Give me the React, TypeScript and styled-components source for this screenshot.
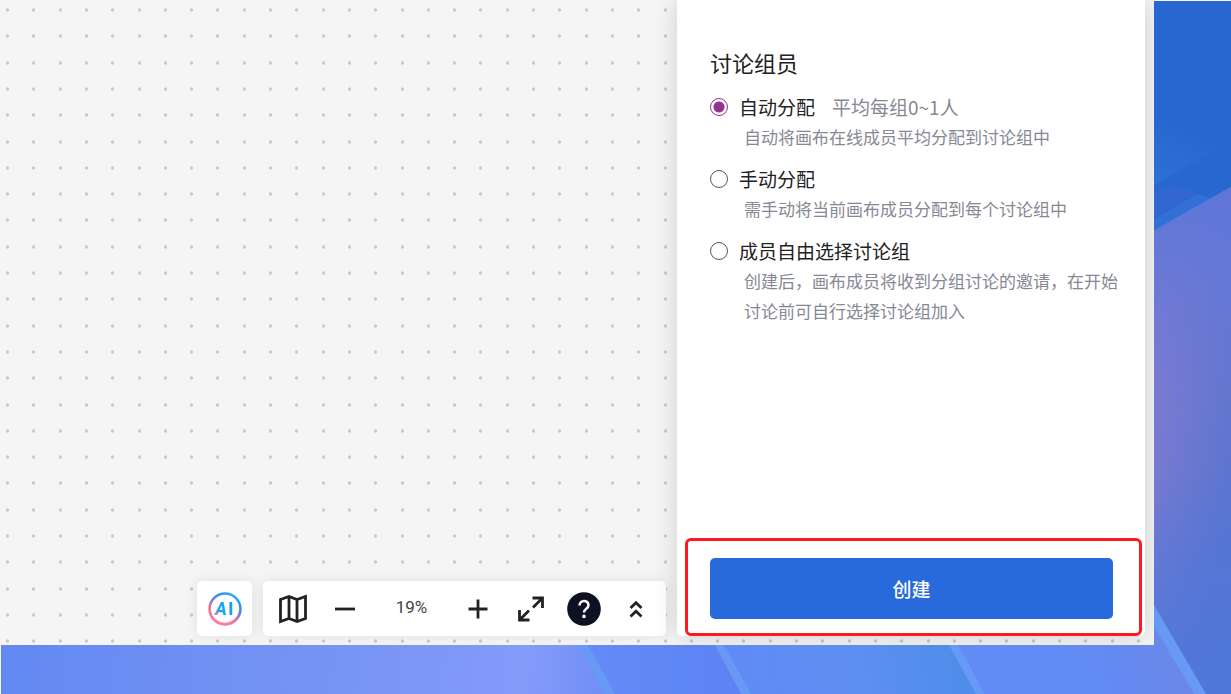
import React from 'react';
import styled, { createGlobalStyle } from 'styled-components';

const GlobalStyle = createGlobalStyle`
  * { box-sizing: border-box; }
  body {
    margin: 0;
    background: #f5f5f5;
    color: #222;
    font-family: "Noto Sans CJK SC", "Noto Sans", sans-serif;
  }
  button, input { font: inherit; }
`;

const Page = styled.div`
  display: grid;
  grid-template: minmax(0, 1fr) / minmax(0, 1fr);
  min-height: 100vh;
`;

const Backdrop = styled.svg`
  grid-area: 1 / 1;
  width: calc(100% - 1px);
  height: calc(100% - 1px);
  margin: 1px 0 0 1px;
`;

const Workspace = styled.main`
  grid-area: 1 / 1;
  z-index: 1;
  display: grid;
  grid-template: minmax(0, 1fr) / minmax(0, 1fr);
  margin: 0 77px 49px 0;
  background: #f5f5f5;
  overflow: hidden;
`;

const Dots = styled.svg`
  grid-area: 1 / 1;
  width: 100%;
  height: 100%;
`;

const Layers = styled.div`
  grid-area: 1 / 1;
  z-index: 1;
  display: flex;
  justify-content: flex-end;
  align-items: flex-end;
  gap: 11px;
  padding: 0 9px 9px 0;
`;

const Toolbar = styled.div<{ $width: number }>`
  display: flex;
  align-items: center;
  justify-content: center;
  flex: none;
  height: 55px;
  width: ${(p) => p.$width}px;
  background: #fff;
  border-radius: 5px;
  box-shadow: 0 0 14px rgba(0, 0, 0, 0.09);
`;

const ToolButton = styled.button<{ $width: number }>`
  display: flex;
  align-items: center;
  justify-content: center;
  width: ${(p) => p.$width}px;
  height: 54px;
  padding: 0;
  border: 0;
  background: none;
  color: #222;
`;

const ZoomLevel = styled.output`
  width: 80px;
  text-align: center;
  font: 17px/24px Roboto, sans-serif;
  padding-bottom: 3px;
  color: #444;
`;

const Panel = styled.form`
  display: flex;
  flex-direction: column;
  align-self: stretch;
  flex: none;
  width: 468px;
  background: #fff;
  border-radius: 0 0 5px 5px;
  box-shadow: 0 0 24px rgba(0, 0, 0, 0.16);
`;

const Members = styled.fieldset`
  display: flex;
  flex-direction: column;
  gap: 11px;
  flex: 1;
  margin: 0;
  padding: 45px 24px 16px 33px;
  border: 0;
`;

const Legend = styled.legend`
  float: left;
  padding: 0;
  font-size: 22px;
  line-height: 35px;
`;

const Option = styled.div`
  display: grid;
  grid-template-columns: 18px minmax(0, 1fr);
  column-gap: 11px;
  align-items: center;
`;

const Radio = styled.input`
  appearance: none;
  width: 18px;
  height: 18px;
  margin: 0;
  border: 1px solid #555;
  border-radius: 50%;
  background: #fff;

  &:checked {
    border-color: #94328f;
    background: radial-gradient(circle, #94328f 5px, #fff 6px);
  }
`;

const OptionLabel = styled.label`
  font-size: 19px;
  line-height: 31px;
`;

const Hint = styled.span`
  margin-left: 17px;
  color: #868993;
`;

const Description = styled.p`
  grid-column: 2;
  margin: 0 0 0 5px;
  font-size: 17px;
  line-height: 30px;
  color: #868993;
`;

const Highlight = styled.div`
  margin: 0 3px 0 8px;
  padding: 17px 26px 14px 22px;
  border: 3px solid #ff1721;
  border-radius: 6px;
`;

const CreateButton = styled.button`
  display: block;
  width: 100%;
  height: 61px;
  padding: 0;
  border: 0;
  border-radius: 5px;
  background: #286adb;
  color: #fff;
  font-size: 19px;
  font-weight: 500;
  line-height: 30px;
`;

const options = [
  { id: 'auto', label: '自动分配', hint: '平均每组0~1人', text: '自动将画布在线成员平均分配到讨论组中' },
  { id: 'manual', label: '手动分配', text: '需手动将当前画布成员分配到每个讨论组中' },
  { id: 'free', label: '成员自由选择讨论组', text: '创建后，画布成员将收到分组讨论的邀请，在开始讨论前可自行选择讨论组加入' },
];

const steps = [0, 26, 53, 79, 105, 132, 158, 184, 210, 237];

function DotGrid() {
  return (
    <Dots aria-hidden="true">
      <defs>
        <pattern id="dots" width="263" height="263" patternUnits="userSpaceOnUse">
          {steps.map((y) => steps.map((x) => <circle key={`${x}-${y}`} cx={x + 7.5} cy={y + 10} r="1.7" fill="#c9c9c9" />))}
        </pattern>
      </defs>
      <rect width="100%" height="100%" fill="url(#dots)" />
    </Dots>
  );
}

function BackdropArt() {
  return (
    <Backdrop viewBox="1 1 1230 693" preserveAspectRatio="none" aria-hidden="true">
      <defs>
        <linearGradient id="left" gradientUnits="userSpaceOnUse" x1="0" y1="640" x2="610" y2="700">
          <stop offset="0" stopColor="#6289f2" />
          <stop offset="0.65" stopColor="#7b96f5" />
          <stop offset="0.86" stopColor="#849bfa" />
          <stop offset="1" stopColor="#6f8df6" />
        </linearGradient>
        <linearGradient id="mid1" gradientUnits="userSpaceOnUse" x1="580" y1="0" x2="740" y2="0">
          <stop offset="0" stopColor="#648cf7" />
          <stop offset="1" stopColor="#5c82f4" />
        </linearGradient>
        <linearGradient id="mid2" gradientUnits="userSpaceOnUse" x1="720" y1="690" x2="960" y2="645">
          <stop offset="0" stopColor="#608af6" />
          <stop offset="0.5" stopColor="#5f8ff2" />
          <stop offset="1" stopColor="#4f8dea" />
        </linearGradient>
        <linearGradient id="mid3" gradientUnits="userSpaceOnUse" x1="950" y1="694" x2="1190" y2="640">
          <stop offset="0" stopColor="#618cf6" />
          <stop offset="0.6" stopColor="#628bf4" />
          <stop offset="1" stopColor="#6c86e6" />
        </linearGradient>
        <linearGradient id="side" gradientUnits="userSpaceOnUse" x1="1145" y1="400" x2="1245" y2="420">
          <stop offset="0" stopColor="#7f7bd0" />
          <stop offset="1" stopColor="#5b75cf" />
        </linearGradient>
        <linearGradient id="sideTop" gradientUnits="userSpaceOnUse" x1="0" y1="210" x2="0" y2="410">
          <stop offset="0" stopColor="#6077d8" />
          <stop offset="1" stopColor="#6077d8" stopOpacity="0" />
        </linearGradient>
        <linearGradient id="sideEnd" gradientUnits="userSpaceOnUse" x1="1154" y1="480" x2="1215" y2="660">
          <stop offset="0" stopColor="#5077da" stopOpacity="0" />
          <stop offset="1" stopColor="#5077da" />
        </linearGradient>
        <linearGradient id="wedge" gradientUnits="userSpaceOnUse" x1="1154" y1="185" x2="1185" y2="120">
          <stop offset="0" stopColor="#2e70d4" />
          <stop offset="1" stopColor="#2866d0" />
        </linearGradient>
      </defs>
      <rect x="0" y="0" width="1231" height="694" fill="url(#left)" />
      <path d="M1150 0H1231V240H1150Z" fill="#2866d0" />
      <path d="M1150 115L1220 148L1154 185H1150Z" fill="url(#wedge)" />
      <path d="M1150 193L1172 185L1197 193L1154 218H1150Z" fill="#3267cf" />
      <path d="M1150 221L1197 194L1212 199L1150 233Z" fill="#326fd7" />
      <path d="M1150 233L1231 187V694H1100Z" fill="url(#side)" />
      <path d="M1150 233L1231 187V410H1150Z" fill="url(#sideTop)" />
      <path d="M1150 480H1231V694H1150Z" fill="url(#sideEnd)" />
      <path d="M579 640L724 640L750 694H604Z" fill="url(#mid1)" />
      <path d="M715 640H956L984 694H742Z" fill="url(#mid2)" />
      <path d="M950 640L1154 618L1200 694H980Z" fill="url(#mid3)" />
      <g fill="#6799f5">
        <path d="M579 645H588L615 694H604Z" />
        <path d="M715 645H724L751 694H741Z" />
        <path d="M949 645H958L985 694H976Z" />
        <path d="M1154 605L1206 694H1194L1154 626Z" />
      </g>
    </Backdrop>
  );
}

function AiIcon() {
  return (
    <svg width="36" height="36" viewBox="0 0 36 36" fill="none" aria-hidden="true">
      <defs>
        <linearGradient id="ring" x1="26" y1="2" x2="9" y2="33" gradientUnits="userSpaceOnUse">
          <stop stopColor="#25aefa" />
          <stop offset="0.35" stopColor="#4b83e4" />
          <stop offset="0.65" stopColor="#e7709b" />
          <stop offset="1" stopColor="#ff7d9d" />
        </linearGradient>
        <linearGradient id="letters" x1="9" y1="25" x2="24" y2="11" gradientUnits="userSpaceOnUse">
          <stop stopColor="#d779c0" />
          <stop offset="0.3" stopColor="#18a8f8" />
          <stop offset="1" stopColor="#1495f6" />
        </linearGradient>
      </defs>
      <circle cx="18" cy="18" r="15.5" stroke="url(#ring)" strokeWidth="2.4" />
      <circle cx="18" cy="17.4" r="14.6" stroke="url(#ring)" strokeWidth="1.2" opacity="0.6" />
      <text y="24" fontFamily="Roboto, sans-serif" fontSize="18" fontWeight="700" fill="url(#letters)">
        <tspan x="8" fontStyle="italic">A</tspan>
        <tspan x="21">I</tspan>
      </text>
    </svg>
  );
}

function Icon({ children, size = 30 }: { children: React.ReactNode; size?: number }) {
  return (
    <svg width={size} height={size} viewBox={`0 0 ${size} ${size}`} fill="none" stroke="currentColor" strokeWidth="2.8" aria-hidden="true">
      {children}
    </svg>
  );
}

export default function App() {
  return (
    <>
      <GlobalStyle />
      <Page>
        <BackdropArt />
        <Workspace>
          <DotGrid />
          <Layers>
            <Toolbar $width={55}>
              <ToolButton $width={55} type="button" aria-label="AI"><AiIcon /></ToolButton>
            </Toolbar>
            <Toolbar $width={403}>
              <ToolButton $width={52} type="button" aria-label="小地图">
                <Icon><path d="M2.500 5.500L11 2.500L19 5.500L27.500 2.500V24.500L19 27.500L11 24.500L2.500 27.500ZM11 2.500V24.500M19 5.500V27.500" /></Icon>
              </ToolButton>
              <ToolButton $width={53} type="button" aria-label="缩小">
                <Icon><path d="M5 15H25" /></Icon>
              </ToolButton>
              <ZoomLevel>19%</ZoomLevel>
              <ToolButton $width={53} type="button" aria-label="放大">
                <Icon><path d="M5.500 15H24.500M15 5.500V24.500" /></Icon>
              </ToolButton>
              <ToolButton $width={53} type="button" aria-label="全屏">
                <Icon><path d="M16.500 4H26.500V14M26 4.500L17 13.500M3.500 16V26H13.500M4 25.500L13 16.500" /></Icon>
              </ToolButton>
              <ToolButton $width={52} type="button" aria-label="帮助">
                <Icon size={34}>
                  <circle cx="17" cy="17" r="16.8" fill="#0e1122" stroke="none" />
                  <path d="M12.5 13.5C12.5 7.500 21.5 7.500 21.5 13.2C21.5 17 17 16.5 17 20.5" stroke="#fff" strokeWidth="2.5" />
                  <circle cx="17" cy="24.4" r="1.8" fill="#fff" stroke="none" />
                </Icon>
              </ToolButton>
              <ToolButton $width={53} type="button" aria-label="收起">
                <Icon><path d="M9.500 14L15 8.800L20.500 14M9.500 22.500L15 17.300L20.500 22.500" /></Icon>
              </ToolButton>
            </Toolbar>
            <Panel onSubmit={(e) => e.preventDefault()}>
              <Members>
                <Legend>讨论组员</Legend>
                {options.map((o) => (
                  <Option key={o.id}>
                    <Radio type="radio" name="mode" id={o.id} defaultChecked={o.id === 'auto'} aria-describedby={`${o.id}-text`} />
                    <OptionLabel htmlFor={o.id}>
                      {o.label}
                      {o.hint && <Hint>{o.hint}</Hint>}
                    </OptionLabel>
                    <Description id={`${o.id}-text`}>{o.text}</Description>
                  </Option>
                ))}
              </Members>
              <Highlight>
                <CreateButton type="submit">创建</CreateButton>
              </Highlight>
            </Panel>
          </Layers>
        </Workspace>
      </Page>
    </>
  );
}
